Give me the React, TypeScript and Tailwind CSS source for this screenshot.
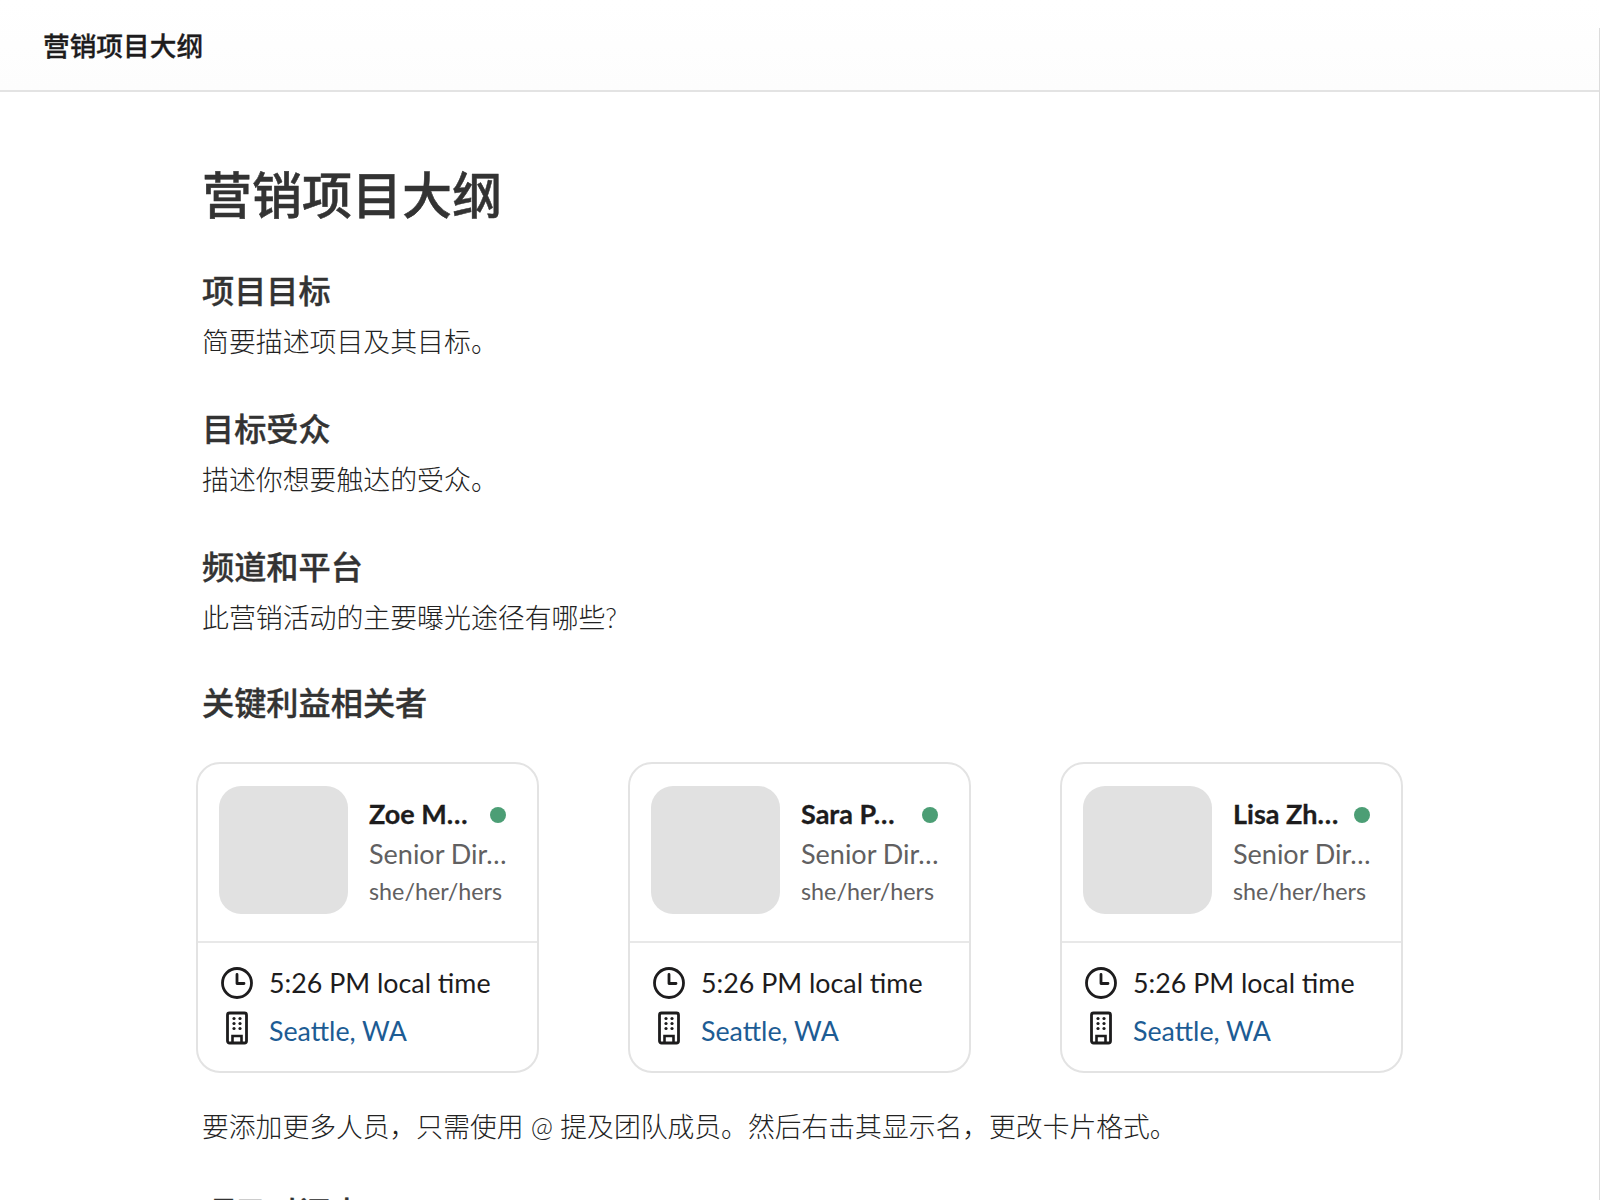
const people = [
  { name: "Zoe M…", title: "Senior Dir…" },
  { name: "Sara P…", title: "Senior Dir…" },
  { name: "Lisa Zh…", title: "Senior Dir…" },
];

const sections = [
  { heading: "项目目标", body: "简要描述项目及其目标。" },
  { heading: "目标受众", body: "描述你想要触达的受众。" },
  { heading: "频道和平台", body: "此营销活动的主要曝光途径有哪些?" },
];

const note = "要添加更多人员\uFF0C只需使用 @ 提及团队成员。然后右击其显示名\uFF0C更改卡片格式。";

const ClockIcon = () => (
  <svg width="34" height="34" viewBox="0 0 34 34" fill="none" stroke="#1d1c1d" strokeWidth="2.8">
    <circle cx="17" cy="17" r="14.5" />
    <path d="M17 8.5V17.5H24" strokeLinecap="round" strokeLinejoin="round" />
  </svg>
);

const BuildingIcon = () => (
  <svg className="-translate-y-[3px]" width="34" height="34" viewBox="0 0 34 34" fill="none">
    <rect x="7.5" y="2" width="19" height="30" rx="2" stroke="#1d1c1d" strokeWidth="2.8" />
    <path d="M12.5 32V25H21.5V32" stroke="#1d1c1d" strokeWidth="2.6" />
    <g fill="#1d1c1d">
      <circle cx="14" cy="7.5" r="1.6" />
      <circle cx="20" cy="7.5" r="1.6" />
      <circle cx="14" cy="12.5" r="1.6" />
      <circle cx="20" cy="12.5" r="1.6" />
      <circle cx="14" cy="17.5" r="1.6" />
      <circle cx="20" cy="17.5" r="1.6" />
    </g>
  </svg>
);

const PersonCard = ({ name, title }: { name: string; title: string }) => (
  <div className="w-[343px] h-[311px] shrink-0 rounded-[24px] border-2 border-[#e3e3e3] bg-white">
    <div className="h-[179px] flex gap-[21px] pt-[22px] pl-[21px] border-b-2 border-[#e8e8e8]">
      <div className="w-[129px] h-[128px] rounded-[22px] bg-[#e1e1e1]" />
      <div className="w-[137px] pt-[11px] whitespace-nowrap">
        <div className="flex items-center justify-between h-[34px]">
          <span className="text-[27px] leading-[34px] font-bold text-[#1d1c1d] [-webkit-text-stroke:0.3px_#1d1c1d]">{name}</span>
          <span className="w-4 h-4 mt-[2px] rounded-full bg-[#4c9e75]" />
        </div>
        <div className="text-[27px] leading-[34px] mt-[6px] text-[#616061]">{title}</div>
        <div className="text-[23.3px] leading-[30px] mt-[5px] text-[#616061]">she/her/hers</div>
      </div>
    </div>
    <div className="pt-[23px] pl-[22px] flex flex-col gap-[14px]">
      <div className="flex items-center gap-[15px] h-[34px]">
        <ClockIcon />
        <span className="text-[26.8px] leading-[34px] text-[#1d1c1d]">5:26 PM local time</span>
      </div>
      <div className="flex items-center gap-[15px] h-[34px]">
        <BuildingIcon />
        <span className="text-[26.8px] leading-[34px] text-[#1d5c94]">Seattle, WA</span>
      </div>
    </div>
  </div>
);

export default function App() {
  return (
    <div className="relative w-[1600px] h-[1200px] overflow-hidden bg-white font-['Lato','Noto_Sans_CJK_SC',sans-serif]">
      <div className="absolute right-0 top-[28px] bottom-0 w-px bg-[#dcdcdc]" />
      <header className="h-[92px] border-b-2 border-[#e3e3e3] pl-[43px] pt-[27px] bg-gradient-to-b from-white to-[#fdfdfd]">
        <div className="text-[26.7px] leading-[38px] font-medium text-[#1d1c1d] [-webkit-text-stroke:0.3px_#1d1c1d]">营销项目大纲</div>
      </header>
      <main className="pl-[196px] pt-[70px]">
        <div className="pl-[6px]">
          <h1 className="text-[50px] leading-[66px] font-medium text-[#333333] [-webkit-text-stroke:0.5px_#333333]">营销项目大纲</h1>
          {sections.map((s, i) => (
            <section key={s.heading} className={i === 0 ? "mt-[41px]" : "mt-[45px]"}>
              <h2 className="text-[32.2px] leading-[44px] font-medium text-[#333333] [-webkit-text-stroke:0.35px_#333333]">{s.heading}</h2>
              <p className="mt-[9px] text-[26.9px] leading-[40px] font-light text-[#222222]">{s.body}</p>
            </section>
          ))}
          <h2 className="mt-[43px] text-[32.2px] leading-[44px] font-medium text-[#333333] [-webkit-text-stroke:0.35px_#333333]">关键利益相关者</h2>
        </div>
        <div className="flex gap-[89px] mt-[37px]">
          {people.map((p) => (
            <PersonCard key={p.name} name={p.name} title={p.title} />
          ))}
        </div>
        <div className="pl-[6px]">
          <p className="mt-[34px] text-[26.8px] leading-[40px] font-light text-[#222222]">{note}</p>
          <h2 className="mt-[44px] text-[32.2px] leading-[44px] font-medium text-[#333333] [-webkit-text-stroke:0.35px_#333333]">项目时间表</h2>
        </div>
      </main>
    </div>
  );
}
